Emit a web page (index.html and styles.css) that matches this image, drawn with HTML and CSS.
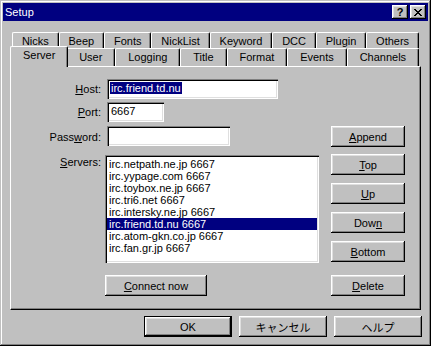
FILE: index.html
```html
<!DOCTYPE html>
<html lang="en">
<head>
    <meta charset="UTF-8">
    <title>Setup</title>
    <link rel="stylesheet" href="styles.css">
</head>
<body>

    <div class="window">
        <!-- Title bar -->
        <div class="titlebar">
            <span class="title">Setup</span>
            <span class="cap-btn cap-help">?</span>
            <span class="cap-btn cap-close">
                <svg width="8" height="7" viewBox="0 0 8 7"><path d="M0 0h2v1h1v1h2v-1h1v-1h2v1h-1v1h-1v1h-1v1h1v1h1v1h1v1h-2v-1h-1v-1h-2v1h-1v1h-2v-1h1v-1h1v-1h1v-1h-1v-1h-1v-1h-1z" fill="#000"/></svg>
            </span>
        </div>

        <!-- Tabs -->
        <div class="tabctl">
            <div class="tabrow back">
                <div class="tab">Nicks</div>
                <div class="tab">Beep</div>
                <div class="tab">Fonts</div>
                <div class="tab">NickList</div>
                <div class="tab">Keyword</div>
                <div class="tab">DCC</div>
                <div class="tab">Plugin</div>
                <div class="tab">Others</div>
            </div>
            <div class="tabrow front">
                <div class="tab active">Server</div>
                <div class="tab">User</div>
                <div class="tab">Logging</div>
                <div class="tab">Title</div>
                <div class="tab">Format</div>
                <div class="tab">Events</div>
                <div class="tab">Channels</div>
            </div>

            <div class="panel">
                <div class="row">
                    <label class="lbl"><u>H</u>ost:</label>
                    <div class="edit edit-host"><span class="sel">irc.friend.td.nu</span></div>
                </div>
                <div class="row row-port">
                    <label class="lbl"><u>P</u>ort:</label>
                    <div class="edit edit-port">6667</div>
                </div>
                <div class="row row-pass">
                    <label class="lbl">Pass<u>w</u>ord:</label>
                    <div class="edit edit-pass"></div>
                    <button class="btn btn-side"><u>A</u>ppend</button>
                </div>
                <div class="row row-servers">
                    <label class="lbl lbl-list"><u>S</u>ervers:</label>
                    <ul class="list">
                        <li>irc.netpath.ne.jp 6667</li>
                        <li>irc.yypage.com 6667</li>
                        <li>irc.toybox.ne.jp 6667</li>
                        <li>irc.tri6.net 6667</li>
                        <li>irc.intersky.ne.jp 6667</li>
                        <li class="on">irc.friend.td.nu 6667</li>
                        <li>irc.atom-gkn.co.jp 6667</li>
                        <li>irc.fan.gr.jp 6667</li>
                    </ul>
                    <div class="side-col">
                        <button class="btn btn-side"><u>T</u>op</button>
                        <button class="btn btn-side"><u>U</u>p</button>
                        <button class="btn btn-side">Dow<u>n</u></button>
                        <button class="btn btn-side"><u>B</u>ottom</button>
                    </div>
                </div>
                <div class="row row-connect">
                    <button class="btn btn-connect"><u>C</u>onnect now</button>
                    <button class="btn btn-side"><u>D</u>elete</button>
                </div>
            </div>
        </div>

        <!-- Dialog buttons -->
        <div class="footer">
            <button class="btn btn-dlg btn-default">OK</button>
            <button class="btn btn-dlg">キャンセル</button>
            <button class="btn btn-dlg">ヘルプ</button>
        </div>
    </div>

</body>
</html>
```

FILE: styles.css
```css
* {
    box-sizing: border-box;
}

body {
    margin: 0;
    background: #c0c0c0;
    font-family: "Liberation Sans", "Noto Sans CJK JP", sans-serif;
    font-size: 11px;
    color: #000;
}

u {
    text-decoration: underline;
    text-underline-offset: 1px;
}

/* Window frame */
.window {
    width: 431px;
    height: 346px;
    padding: 3px;
    background: #c0c0c0;
    box-shadow: inset -1px -1px #000, inset 1px 1px #c0c0c0, inset -2px -2px #808080, inset 2px 2px #fff;
}

.titlebar {
    display: flex;
    align-items: center;
    height: 18px;
    padding: 0 2px;
    background: #000080;
    color: #fff;
}

.title {
    flex: 1;
    line-height: 14px;
}

.cap-btn {
    display: flex;
    align-items: center;
    justify-content: center;
    width: 16px;
    height: 14px;
    background: #c0c0c0;
    color: #000;
    font-weight: bold;
    font-size: 11px;
    line-height: 12px;
    box-shadow: inset -1px -1px #000, inset 1px 1px #fff, inset -2px -2px #808080, inset 2px 2px #dfdfdf;
}

.cap-close {
    margin-left: 2px;
}

/* Tab control */
.tabctl {
    margin: 11px 7px 0 7px;
}

.tabrow {
    display: flex;
    margin: 0 2px;
}

.tabrow.back {
    height: 16px;
}

.tabrow.front {
    height: 18px;
}

.tab {
    flex: 1 1 auto;
    height: 100%;
    padding: 2px 6px 0;
    text-align: center;
    line-height: 13px;
    white-space: nowrap;
    background: #c0c0c0;
    border-top: 1px solid #fff;
    border-left: 1px solid #fff;
    border-right: 1px solid #000;
    border-radius: 2px 2px 0 0;
    box-shadow: inset -1px 0 #808080;
}

.tab.active {
    position: relative;
    z-index: 1;
    height: 21px;
    margin: -2px -2px -1px;
    padding-top: 2px;
}

.panel {
    height: 244px;
    padding: 12px 15px 0 0;
    border: 1px solid;
    border-color: #fff #000 #000 #fff;
    box-shadow: inset -1px -1px #808080;
}

.row {
    display: flex;
    align-items: center;
}

.row-port {
    margin-top: 3px;
}

.row-pass {
    margin-top: 4px;
}

.row-servers {
    margin-top: 7px;
    align-items: flex-start;
}

.row-connect {
    margin-top: 12px;
}

.lbl {
    flex: none;
    width: 90px;
    text-align: right;
}

.lbl-list {
    padding-top: 2px;
}

.edit {
    flex: none;
    height: 20px;
    margin-left: 6px;
    padding: 2px 3px;
    line-height: 15px;
    background: #fff;
    box-shadow: inset 1px 1px #808080, inset 2px 2px #000, inset -1px -1px #fff, inset -2px -2px #dfdfdf;
}

.edit-host {
    width: 171px;
    padding-left: 3px;
}

.edit-port {
    width: 57px;
    padding-left: 4px;
}

.edit-pass {
    width: 123px;
    align-self: flex-start;
}

.sel {
    display: inline-block;
    height: 12px;
    line-height: 12px;
    padding: 0 1px;
    background: #000080;
    color: #fff;
}

.list {
    flex: none;
    list-style: none;
    width: 214px;
    height: 108px;
    margin: 1px 0 0 4px;
    padding: 3px 2px 0;
    background: #fff;
    box-shadow: inset 1px 1px #808080, inset 2px 2px #000, inset -1px -1px #fff, inset -2px -2px #dfdfdf;
}

.list li {
    height: 12px;
    line-height: 12px;
    padding-left: 2px;
}

.list li.on {
    background: #000080;
    color: #fff;
}

.side-col {
    display: flex;
    flex-direction: column;
    gap: 8px;
    margin-left: auto;
}

/* Buttons */
.btn {
    height: 21px;
    padding: 0;
    border: none;
    background: #c0c0c0;
    font: inherit;
    color: #000;
    box-shadow: inset -1px -1px #000, inset 1px 1px #fff, inset -2px -2px #808080, inset 2px 2px #dfdfdf;
}

.btn-side {
    width: 74px;
    margin-left: auto;
}

.btn-connect {
    width: 102px;
    margin-left: 94px;
}

.footer {
    display: flex;
    justify-content: flex-end;
    gap: 7px;
    margin-top: 6px;
    padding-right: 6px;
}

.btn-dlg {
    width: 88px;
}

.btn-default {
    box-shadow: inset 0 0 0 1px #000, inset -2px -2px #000, inset 2px 2px #fff, inset -3px -3px #808080, inset 3px 3px #dfdfdf;
}
```
